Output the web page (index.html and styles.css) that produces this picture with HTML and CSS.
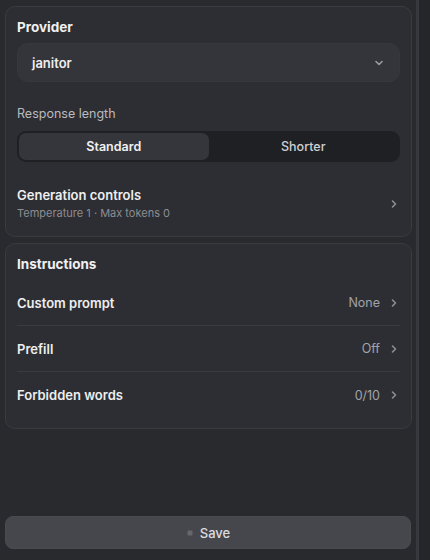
FILE: index.html
```html
<!DOCTYPE html>
<html>
<head>
<meta charset="utf-8">
<link rel="stylesheet" href="styles.css">
</head>
<body>
<div class="page">
  <div class="main">
    <div class="content">
      <section class="card">
        <div class="card-title">Provider</div>
        <div class="select">
          <span>janitor</span>
          <svg class="chev-down" width="12" height="12" viewBox="0 0 12 12"><path d="M3 4.5 L6 7.5 L9 4.5" fill="none" stroke="#9a9ba0" stroke-width="1.6" stroke-linecap="round" stroke-linejoin="round"/></svg>
        </div>
        <div class="field-label">Response length</div>
        <div class="segmented">
          <div class="seg active">Standard</div>
          <div class="seg">Shorter</div>
        </div>
        <div class="gen-row">
          <div class="gen-text">
            <div class="row-label">Generation controls</div>
            <div class="sub">Temperature 1 · Max tokens 0</div>
          </div>
          <svg class="chev" width="10" height="12" viewBox="0 0 10 12"><path d="M3.5 3 L6.5 6 L3.5 9" fill="none" stroke="#8d8e93" stroke-width="1.6" stroke-linecap="round" stroke-linejoin="round"/></svg>
        </div>
      </section>
      <section class="card card2">
        <div class="card-title">Instructions</div>
        <div class="row">
          <span class="row-label">Custom prompt</span>
          <span class="value">None</span>
          <svg class="chev" width="10" height="12" viewBox="0 0 10 12"><path d="M3.5 3 L6.5 6 L3.5 9" fill="none" stroke="#8d8e93" stroke-width="1.6" stroke-linecap="round" stroke-linejoin="round"/></svg>
        </div>
        <div class="row">
          <span class="row-label">Prefill</span>
          <span class="value">Off</span>
          <svg class="chev" width="10" height="12" viewBox="0 0 10 12"><path d="M3.5 3 L6.5 6 L3.5 9" fill="none" stroke="#8d8e93" stroke-width="1.6" stroke-linecap="round" stroke-linejoin="round"/></svg>
        </div>
        <div class="row">
          <span class="row-label">Forbidden words</span>
          <span class="value">0/10</span>
          <svg class="chev" width="10" height="12" viewBox="0 0 10 12"><path d="M3.5 3 L6.5 6 L3.5 9" fill="none" stroke="#8d8e93" stroke-width="1.6" stroke-linecap="round" stroke-linejoin="round"/></svg>
        </div>
      </section>
    </div>
    <button class="save">
      <svg width="8" height="8" viewBox="0 0 8 8"><rect x="1.5" y="1.5" width="5" height="5" rx="1" fill="#66676c"/></svg>
      <span>Save</span>
    </button>
  </div>
  <div class="rail"></div>
</div>
</body>
</html>
```
FILE: styles.css
```css
* { box-sizing: border-box; }
html, body {
  margin: 0;
  padding: 0;
  background: #27282c;
  font-family: Inter, "Noto Sans", sans-serif;
  color: #e6e6e8;
}
.page {
  display: flex;
  height: 560px;
  width: 430px;
}
.main {
  flex: 1;
  display: flex;
  flex-direction: column;
  justify-content: space-between;
  padding: 6px 4px 11px 5px;
  background: #292a2e;
}
.content {
  display: flex;
  flex-direction: column;
  gap: 6px;
}
.rail {
  width: 14px;
  border-left: 3px solid #37383d;
  background: #25262a;
}
.card {
  background: #2d2e33;
  border: 1px solid #3a3b40;
  border-radius: 10px;
  padding: 12px 11px 16px 11px;
}
.card-title {
  font-size: 13.5px;
  font-weight: 700;
  line-height: 16px;
  color: #f0f0f2;
}
.select {
  margin-top: 8px;
  height: 39px;
  background: #34353a;
  border: 1px solid #37383d;
  border-radius: 11px;
  display: flex;
  align-items: center;
  justify-content: space-between;
  padding: 0 14px 0 14px;
  font-size: 13px;
  font-weight: 600;
  color: #eeeef0;
}
.field-label {
  margin-top: 24px;
  font-size: 12.5px;
  line-height: 16px;
  color: #b9babe;
}
.segmented {
  margin-top: 9px;
  height: 31px;
  background: #1f2024;
  border-radius: 9px;
  padding: 2px;
  display: flex;
}
.seg {
  flex: 1;
  display: flex;
  align-items: center;
  justify-content: center;
  font-size: 12.5px;
  font-weight: 500;
  color: #cfd0d3;
  border-radius: 7px;
}
.seg.active {
  background: #35363b;
  color: #f0f0f2;
  font-weight: 600;
}
.gen-row {
  margin-top: 25px;
  display: flex;
  align-items: center;
  justify-content: space-between;
  padding-right: 1px;
}
.row-label {
  font-size: 13px;
  font-weight: 600;
  line-height: 16px;
  color: #eeeef0;
}
.sub {
  margin-top: 4px;
  font-size: 11px;
  line-height: 13px;
  color: #8c8d92;
}
.card2 {
  padding: 12px 11px 10px 11px;
}
.row {
  display: flex;
  align-items: center;
  height: 46px;
  border-bottom: 1px solid #3a3b40;
  padding-right: 1px;
}
.card2 .card-title + .row { margin-top: 8px; }
.row:last-child { border-bottom: none; }
.row .row-label { flex: 1; }
.value {
  font-size: 12.5px;
  color: #a2a3a8;
  margin-right: 9px;
}
.save {
  height: 33px;
  border: 1px solid #4a4b50;
  border-radius: 8px;
  background: #46474c;
  color: #dcdde0;
  font-family: Inter, "Noto Sans", sans-serif;
  font-size: 13px;
  font-weight: 500;
  display: flex;
  align-items: center;
  justify-content: center;
  gap: 6px;
  padding: 0;
  margin-right: 1px;
}
```
